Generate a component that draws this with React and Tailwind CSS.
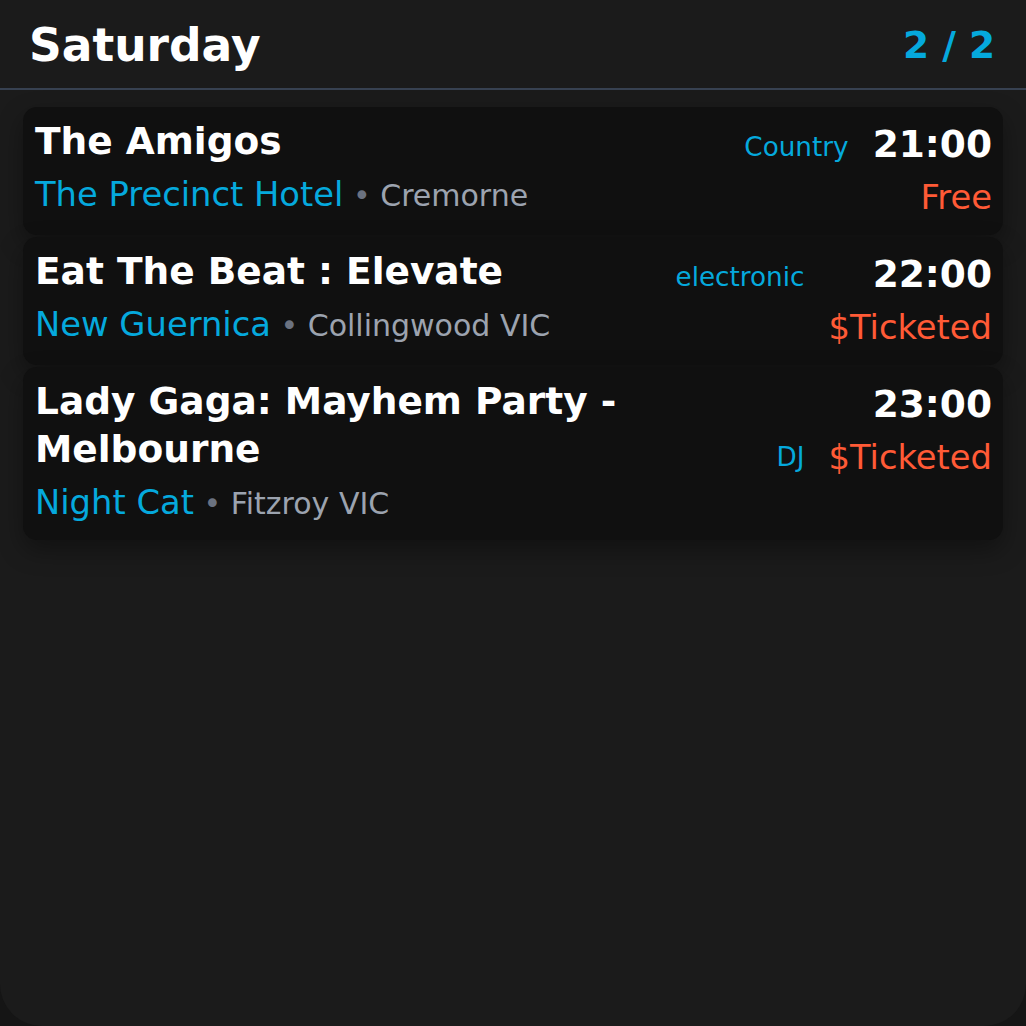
import React from 'react';

const events = [
    { title: 'The Amigos', venue: 'The Precinct Hotel', place: 'Cremorne', genre: 'Country', genreRow: 1, time: '21:00', price: 'Free' },
    { title: 'Eat The Beat : Elevate', venue: 'New Guernica', place: 'Collingwood VIC', genre: 'electronic', genreRow: 1, time: '22:00', price: '$Ticketed' },
    { title: 'Lady Gaga: Mayhem Party - Melbourne', venue: 'Night Cat', place: 'Fitzroy VIC', genre: 'DJ', genreRow: 2, time: '23:00', price: '$Ticketed' },
];

const Genre = ({ text, row }) => (
    <div className={`self-end justify-self-end text-[26.25px] leading-[30px] text-[#05a9dd] whitespace-nowrap ${row === 1 ? 'pb-[6px]' : 'pb-[10px]'}`}>
        {text}
    </div>
);

const EventCard = ({ ev }) => (
    <div className="flex justify-between items-start rounded-[14px] bg-[#101010] shadow-[0_10px_24px_rgba(0,0,0,0.35)] pl-[12px] pr-[11px] pt-[10px] pb-[13px]">
        <div className="flex flex-col min-w-0 flex-1">
            <div className="text-[37.5px] font-bold leading-[48px] text-white">{ev.title}</div>
            <div className="mt-[6px] h-[48px] text-[33.75px] leading-[48px] whitespace-nowrap">
                <span className="text-[#05a9dd]">{ev.venue}</span>
                <span className="text-[30px] leading-none text-[#6b7280]"> • </span>
                <span className="text-[30px] leading-none text-[#9ca3af]">{ev.place}</span>
            </div>
        </div>
        <div className="grid grid-cols-[auto_auto] gap-x-[24px] gap-y-[6px] pt-[3px] ml-[24px] shrink-0">
            {ev.genreRow === 1 ? <Genre text={ev.genre} row={1} /> : <div />}
            <div className="justify-self-end text-[37.5px] font-bold leading-[48px] text-white">{ev.time}</div>
            {ev.genreRow === 2 ? <Genre text={ev.genre} row={2} /> : <div />}
            <div className="justify-self-end text-[33.75px] leading-[48px] text-[#ff5a36] whitespace-nowrap">{ev.price}</div>
        </div>
    </div>
);

export default function App() {
    return (
        <div className="min-h-screen bg-[#151515]">
            <div className="h-[1026px] rounded-b-[42px] bg-[#1b1b1b] overflow-hidden font-['DejaVu_Sans',sans-serif]">
                <div className="h-[90px] flex items-center justify-between pl-[29px] pr-[31px] pt-[3px] border-b-2 border-[#374151]">
                    <h1 className="text-[45.5px] font-bold text-white leading-none">Saturday</h1>
                    <span className="text-[37.5px] font-bold text-[#05a9dd] leading-none">2 / 2</span>
                </div>
                <div className="px-[23px] pt-[17px] flex flex-col gap-[2px]">
                    {events.map((ev) => (
                        <EventCard key={ev.title} ev={ev} />
                    ))}
                </div>
            </div>
        </div>
    );
}
